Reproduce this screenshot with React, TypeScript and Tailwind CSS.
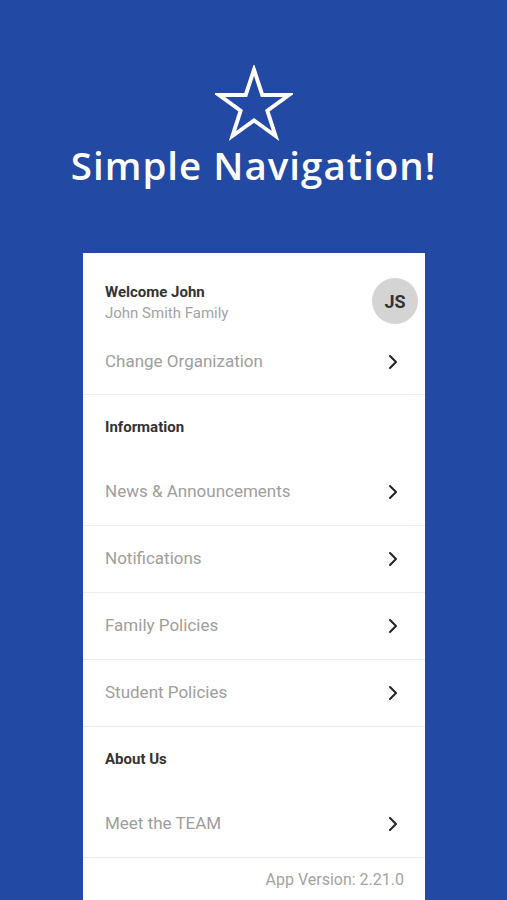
import { ReactNode } from 'react'

function Chevron() {
  return (
    <svg width="12" height="16" viewBox="0 0 12 16" className="shrink-0">
      <polyline points="3,2 9,8 3,14" fill="none" stroke="#222" strokeWidth="2" strokeLinecap="round" strokeLinejoin="round" />
    </svg>
  )
}

function StarIcon() {
  return (
    <svg width="78" height="78" viewBox="0 0 100 100">
      <polygon
        points="50,6 60.6,38.4 94.7,38.5 67.1,58.6 77.6,91 50,71 22.4,91 32.9,58.6 5.3,38.5 39.4,38.4"
        fill="none"
        stroke="white"
        strokeWidth="5"
        strokeLinejoin="miter"
      />
    </svg>
  )
}

function Row({ label }: { label: string }) {
  return (
    <div className="h-[67px] flex items-center justify-between pl-[22px] pr-[26px] border-b border-[#ececec]">
      <span className="text-[17px] text-[#9e9e9e]">{label}</span>
      <Chevron />
    </div>
  )
}

function SectionTitle({ children }: { children: ReactNode }) {
  return (
    <div className="h-[64px] flex items-center pl-[22px]">
      <span className="text-[15px] font-bold text-[#333]">{children}</span>
    </div>
  )
}

export default function App() {
  return (
    <div className="w-[507px] h-[900px] overflow-hidden bg-[#2249a3] flex flex-col items-center" style={{ fontFamily: 'Roboto, "Liberation Sans", sans-serif' }}>
      <div className="mt-[65px]">
        <StarIcon />
      </div>
      <h1 className="text-white text-[38.5px] font-semibold tracking-[1px] leading-[44px] [font-variant-ligatures:none]" style={{ fontFamily: '"Open Sans", Lato, sans-serif' }}>
        Simple Navigation!
      </h1>
      <div className="mt-[66px] w-[342px] ml-[1px] flex-1 bg-white flex flex-col">
        <div className="h-[79px] flex items-start justify-between pl-[22px] pr-[7px] pt-[29px]">
          <div className="flex flex-col">
            <span className="text-[15px] font-bold text-[#333] leading-[20px]">Welcome John</span>
            <span className="text-[15px] text-[#a3a3a3] leading-[20px] mt-[1px]">John Smith Family</span>
          </div>
          <div className="w-[46px] h-[46px] -mt-[4px] rounded-full bg-[#d4d4d4] flex items-center justify-center text-[18px] font-bold text-[#333]">
            JS
          </div>
        </div>
        <div className="h-[65px] flex items-center justify-between pl-[22px] pr-[26px] border-b border-[#ececec] -mt-[2px]">
          <span className="text-[17px] text-[#9e9e9e]">Change Organization</span>
          <Chevron />
        </div>
        <SectionTitle>Information</SectionTitle>
        <Row label="News & Announcements" />
        <Row label="Notifications" />
        <Row label="Family Policies" />
        <Row label="Student Policies" />
        <SectionTitle>About Us</SectionTitle>
        <Row label="Meet the TEAM" />
        <div className="h-[44px] flex items-center justify-end pr-[21px]">
          <span className="text-[16px] text-[#a3a3a3]">App Version: 2.21.0</span>
        </div>
      </div>
    </div>
  )
}
